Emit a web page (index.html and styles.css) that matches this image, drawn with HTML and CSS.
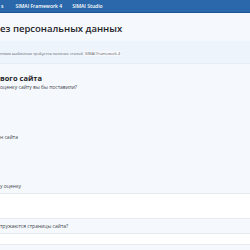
FILE: index.html
```html
<!DOCTYPE html>
<html lang="ru">
<head>
<meta charset="utf-8">
<link rel="stylesheet" href="styles.css">
</head>
<body>
<header class="nav">
  <span class="nav-item nav-cut">s</span>
  <span class="nav-item">SIMAI Framework 4</span>
  <span class="nav-item">SIMAI Studio</span>
</header>
<section class="hero">
  <h1 class="title">ез персональных данных</h1>
</section>
<div class="notice">нным шаблоном требуется наличие стилей <span class="code">SIMAI Framework 4</span></div>
<main class="form">
  <h2 class="form-title">вого сайта</h2>
  <p class="question">оценку сайту вы бы поставили?</p>
  <div class="gap-a"></div>
  <p class="question">н сайта</p>
  <div class="gap-b"></div>
  <p class="question label">у оценку</p>
  <div class="field field-tall"></div>
  <p class="question label-band">тружаются страницы сайта?</p>
  <div class="field field-short"></div>
  <div class="tail"></div>
</main>
</body>
</html>
```
FILE: styles.css
```css
html, body {
  margin: 0;
  padding: 0;
  overflow: hidden;
  background: #f5f9fd;
  font-family: "Open Sans", "Liberation Sans", sans-serif;
}
.nav {
  height: 12px;
  background: #2b68ab;
  border-bottom: 1px solid #1d5592;
  display: flex;
  align-items: center;
  gap: 10px;
  padding-left: 1px;
}
.nav-item {
  color: #fff;
  font-size: 5px;
  font-weight: 600;
  line-height: 1;
  white-space: nowrap;
}
.nav-cut {
  margin-right: 2px;
}
.hero {
  height: 28px;
  background: #f5f9fd;
  display: flex;
  align-items: center;
}
.title {
  margin: 0;
  margin-top: 2px;
  font-size: 9.5px;
  font-weight: 600;
  color: #1f2328;
  white-space: nowrap;
}
.notice {
  background: #eef4fb;
  border-bottom: 1px solid #e8edf4;
  font-size: 3.9px;
  color: #5e636a;
  display: flex;
  align-items: center;
  padding-top: 2px;
  box-sizing: border-box;
  height: 23px;
  white-space: nowrap;
}
.code {
  background: #f6f8fb;
  padding: 0 1px;
  margin-left: 1px;
}
.form {
  display: flex;
  flex-direction: column;
}
.form-title {
  margin: 10px 0 0;
  font-size: 7.5px;
  font-weight: 700;
  color: #1f2328;
  line-height: 8px;
  white-space: nowrap;
}
.question {
  margin: 0;
  font-size: 5px;
  color: #3f444a;
  line-height: 6px;
  white-space: nowrap;
}
.form-title + .question {
  margin-top: 2px;
}
.gap-a {
  height: 44px;
}
.gap-b {
  height: 43px;
}
.label {
  padding-bottom: 4px;
}
.field {
  background: #fff;
  border-top: 1px solid #e6e9ed;
  border-bottom: 1px solid #e6e9ed;
}
.field-tall {
  height: 24px;
}
.field-short {
  height: 10px;
}
.label-band {
  height: 14px;
  line-height: 14px;
}
.tail {
  height: 10px;
  background: #f5f9fd;
}
```
